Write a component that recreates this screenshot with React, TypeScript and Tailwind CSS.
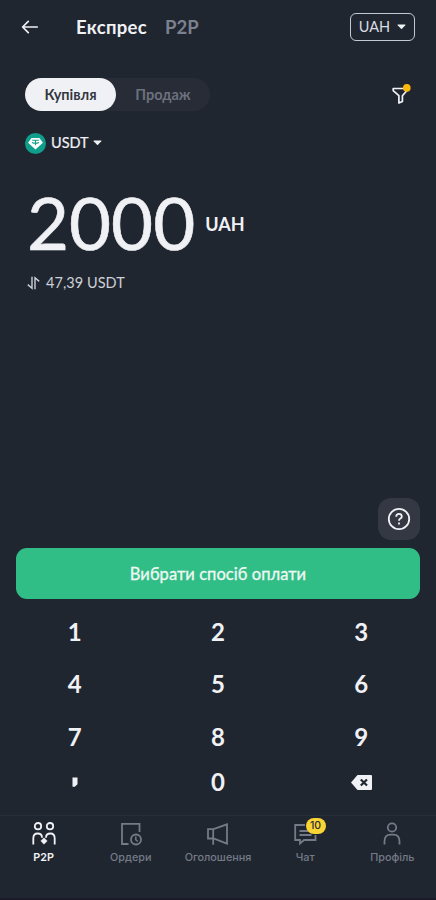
import React from 'react';

interface NavItemProps {
  label: string;
  active?: boolean;
  badge?: string;
  children: React.ReactNode;
}

const Caret = () => (
  <svg width="9" height="6" viewBox="0 0 9 6" fill="#f0f1f5">
    <path d="M1 .5h7q.8 0 .3.7L5 4.8q-.5.5-1 0L.7 1.2Q.2.5 1 .5Z" />
  </svg>
);

const Header = () => (
  <header className="flex h-[55px] shrink-0 items-center pl-[21px] pr-[21px]">
    <svg className="mb-px" width="18" height="14" viewBox="0 0 18 14" fill="none" stroke="#f0f1f5" strokeWidth="1.7" strokeLinecap="round" strokeLinejoin="round">
      <path d="M16.2 7H2M7.3 1.3 1.6 7l5.7 5.7" />
    </svg>
    <h1 className="ml-[37px] w-[71px] whitespace-nowrap text-[18.5px] font-bold tracking-[0.3px] text-[#f0f1f5]">Експрес</h1>
    <span className="ml-[18px] text-[18.5px] font-bold text-[#7b818e]">P2P</span>
    <button className="mb-px ml-auto flex h-7 w-[65px] items-center justify-center gap-[7px] rounded-[6px] border border-[#c5c8d0] text-[14.5px] text-[#d9dce2]">
      UAH
      <Caret />
    </button>
  </header>
);

const Tabs = () => (
  <div className="mt-[23px] flex h-[33px] shrink-0 items-center justify-between pl-[25px] pr-[25px]">
    <div className="flex h-[33px] w-[185px] rounded-full bg-[#272c37] text-[14.5px] font-bold">
      <button className="w-[91px] rounded-full bg-[#f0f1f5] text-[#333741]">Купівля</button>
      <button className="flex-1 text-[#6c717d]">Продаж</button>
    </div>
    <svg width="19" height="22" viewBox="0 0 19 22" fill="none">
      <path d="M1.2 4.5h13.6v2.2l-4.4 5v5.7L6.9 19v-7.3l-5.7-5Z" stroke="#f0f1f5" strokeWidth="1.7" strokeLinejoin="round" />
      <circle cx="14.8" cy="3.9" r="3.8" fill="#fdb90b" />
    </svg>
  </div>
);

const Amount = () => (
  <section className="text-[#f0f1f5]">
    <div className="mt-[21px] flex h-[22px] items-center pl-[25px] text-[14.5px]">
      <svg width="21" height="21" viewBox="0 0 21 21">
        <circle cx="10.5" cy="10.5" r="10.5" fill="#109e8c" />
        <path d="M6.5 5h8l3.4 4.8-7.4 6.7-7.4-6.7Z" fill="#fff" />
        <path d="M7.2 7.2h6.6M10.5 7.2v5M7 9.5q3.5 1.6 7 0" stroke="#109e8c" strokeWidth="1.1" fill="none" />
      </svg>
      <span className="ml-[5px] mr-[4px] [-webkit-text-stroke:0.2px]">USDT</span>
      <Caret />
    </div>
    <div className="mt-[29px] flex h-[80px] items-center pl-[27px]">
      <span className="-mt-[2px] text-[72.5px] leading-[80px] [-webkit-text-stroke:0.6px]">2000</span>
      <span className="ml-[10px] mt-[2px] text-[18px] font-bold">UAH</span>
    </div>
    <div className="mt-[9px] flex h-[22px] items-center pl-[27px] text-[14.5px] text-[#cdd0d7]">
      <svg width="13" height="14" viewBox="0 0 13 14" fill="none" stroke="#cdd0d7" strokeWidth="1.4">
        <path d="M5 .8v11.4L.8 8.6M8 13.2V1.8l4.2 3.6" />
      </svg>
      <span className="ml-[6px] tracking-[0.05px]">47,39 USDT</span>
    </div>
  </section>
);

const keys = ['1', '2', '3', '4', '5', '6', '7', '8', '9'];

const Keypad = () => (
  <div className="mt-[6px] shrink-0 px-[3px] text-[24px] font-bold text-[#f0f1f5]">
    <div className="grid grid-cols-3">
      {keys.map((key) => (
        <button key={key} className="h-[52.6px] leading-none">{key}</button>
      ))}
    </div>
    <div className="grid h-[38px] grid-cols-3 items-center">
      <button className="flex justify-center">
        <svg width="6" height="11" viewBox="0 0 6 11" fill="#f0f1f5">
          <path d="M.5.5h5v6.7L2.8 9.7H.5Z" />
        </svg>
      </button>
      <button className="leading-none">0</button>
      <button className="flex justify-center">
        <svg width="21" height="15" viewBox="0 0 21 15">
          <path d="M6.5 0H20q1 0 1 1v13q0 1-1 1H6.5L0 7.5Z" fill="#f0f1f5" />
          <path d="m9.8 4.5 6.2 6m0-6-6.2 6" stroke="#202630" strokeWidth="2.2" />
        </svg>
      </button>
    </div>
  </div>
);

const NavItem: React.FC<NavItemProps> = ({ label, active, badge, children }) => (
  <button className={`relative flex flex-col items-center pt-[5px] ${active ? 'font-semibold text-[#f0f1f5]' : 'font-medium text-[#747a87]'}`}>
    <svg width="26" height="26" viewBox="0 0 26 26" fill="none" stroke="currentColor" strokeWidth="1.8">
      {children}
    </svg>
    <span className="mt-[4px] whitespace-nowrap font-[Inter,sans-serif] text-[10.8px] leading-[14px]">{label}</span>
    {badge && (
      <span className="absolute left-[44px] top-[2px] flex h-[16px] w-[20px] items-center justify-center rounded-full bg-[#f9d434] font-[Inter,sans-serif] text-[10.5px] font-medium text-[#292d35]">
        {badge}
      </span>
    )}
  </button>
);

const BottomNav = () => (
  <nav className="mt-[14px] grid h-[83px] shrink-0 grid-cols-5 items-start border-t border-[#282d38]">
    <NavItem label="P2P" active>
      <circle cx="7" cy="5.2" r="3.2" />
      <circle cx="19" cy="5.2" r="3.2" />
      <path d="M2.3 23.5v-6q0-5 4.3-5 4.4 0 4.4 4.2M23.7 23.5v-6q0-5-4.3-5-4.4 0-4.4 4.2" />
      <path d="m13 16.8 3.2 3.2-3.2 3.2L9.8 20Z" fill="currentColor" strokeWidth="0.5" />
    </NavItem>
    <NavItem label="Ордери">
      <path d="M10.5 23H4V2.8h17.5V11" />
      <circle cx="18" cy="18.5" r="5" />
      <path d="M17.8 15.5v3.2l2 1.8" strokeWidth="1.5" />
    </NavItem>
    <NavItem label="Оголошення">
      <path d="M3 8.2h5.5L22 3.3v19.4l-13.5-5.2H3ZM8.2 8.2v15.6" />
    </NavItem>
    <NavItem label="Чат" badge="10">
      <path d="M13 4H3.2v15H8v3.5l4-3.5h11.5v-5M7.5 10H16M7.5 14h12" />
    </NavItem>
    <NavItem label="Профіль">
      <circle cx="13" cy="6.5" r="4.2" />
      <path d="M5.5 23.5v-3q0-6.8 6-6.8h3q6 0 6 6.8v3" />
    </NavItem>
  </nav>
);

export default function App() {
  return (
    <div className="flex h-[900px] w-[436px] flex-col overflow-hidden border-b-2 border-[#1b1a29] bg-[#202630] font-[Lato,sans-serif]">
      <Header />
      <Tabs />
      <Amount />
      <div className="mt-auto flex justify-end pr-4">
        <button className="flex h-[42px] w-[42px] items-center justify-center rounded-[13px] bg-[#333843]">
          <svg width="24" height="24" viewBox="0 0 24 24" fill="none" stroke="#f0f1f5" strokeWidth="1.8">
            <circle cx="12" cy="12" r="10.2" />
            <path d="M9.2 9.7q.1-2.8 2.8-2.8t2.8 2.5q0 1.3-1.4 2.1-1.4.8-1.4 2.2M12 15.5v2" />
          </svg>
        </button>
      </div>
      <button className="mx-4 mt-2 h-[51px] shrink-0 rounded-[11px] bg-[#30be86] pt-px text-[16.5px] tracking-[0.05px] text-[#f0f8f5] [-webkit-text-stroke:0.3px]">Вибрати спосіб оплати</button>
      <Keypad />
      <BottomNav />
    </div>
  );
}
